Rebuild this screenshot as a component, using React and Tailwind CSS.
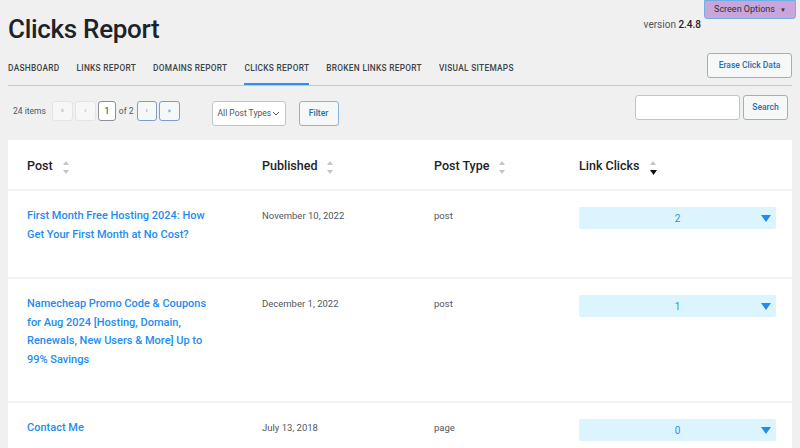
import React from 'react';

const tabs = ['Dashboard', 'Links Report', 'Domains Report', 'Clicks Report', 'Broken Links Report', 'Visual Sitemaps'];

const rows = [
    {
        title: 'First Month Free Hosting 2024: How Get Your First Month at No Cost?',
        date: 'November 10, 2022',
        type: 'post',
        clicks: 2,
        h: 'h-[88px]',
    },
    {
        title: 'Namecheap Promo Code & Coupons for Aug 2024 [Hosting, Domain, Renewals, New Users & More] Up to 99% Savings',
        date: 'December 1, 2022',
        type: 'post',
        clicks: 1,
        h: 'h-[124px]',
    },
    {
        title: 'Contact Me',
        date: 'July 13, 2018',
        type: 'page',
        clicks: 0,
        h: 'h-[60px]',
    },
];

const SortIcon = ({ active }) => (
    <span className="flex flex-col items-center gap-[5px] ml-[10px] mt-[3px]">
        <svg width="6" height="4" viewBox="0 0 6 4"><path d="M3 0L6 4H0z" fill="#c4c4c4" /></svg>
        {active ? (
            <svg width="7" height="5" viewBox="0 0 7 5"><path d="M0 0H7L3.5 5z" fill="#111" /></svg>
        ) : (
            <svg width="6" height="4" viewBox="0 0 6 4"><path d="M0 0H6L3 4z" fill="#c4c4c4" /></svg>
        )}
    </span>
);

const App = () => {
    return (
        <div className="w-[800px] h-[448px] overflow-hidden bg-[#f0f0f0] text-[#1d2327]" style={{ fontFamily: 'Roboto, "Noto Sans", sans-serif' }}>
            {/* 상단 헤더 */}
            <div className="flex justify-between pl-2 pr-1">
                <h1 className="pt-[13px] text-[26px] leading-[32px] font-medium tracking-[-0.3px] text-[#1d2327]">Clicks Report</h1>
                <div className="flex flex-col items-end">
                    <button className="h-[19px] w-[92px] bg-[#c8a5da] border border-[#72aee6] rounded-b-[3px] text-[9px] text-[#2c3338] flex items-center justify-center gap-[5px]">
                        Screen Options <span className="text-[6px]">▼</span>
                    </button>
                    <div className="-mt-[2px] mr-[95px] text-[10px] text-[#50575e]">
                        version <span className="font-medium text-[#1d2327]">2.4.8</span>
                    </div>
                </div>
            </div>

            {/* 탭 */}
            <div className="mx-2 mt-[8px] flex items-end justify-between border-b border-[#c9c9c9]">
                <div className="flex gap-[17px] text-[8.3px] font-medium tracking-[0.3px] text-[#3c434a] uppercase">
                    {tabs.map((t) => (
                        <div
                            key={t}
                            className={`pb-[9px] border-b-2 ${t === 'Clicks Report' ? 'border-[#2e8ff0]' : 'border-transparent'}`}
                        >
                            {t}
                        </div>
                    ))}
                </div>
                <button className="mb-[7px] h-[25px] w-[85px] border border-[#8cb3d9] rounded-[3px] bg-[#f6f7f7] text-[8.5px] font-medium text-[#2271b1]">
                    Erase Click Data
                </button>
            </div>

            {/* 툴바 */}
            <div className="mx-2 mt-[9px] flex items-start justify-between">
                <div className="flex items-start mt-[6px] text-[8.5px] text-[#50575e]">
                    <div className="flex items-center h-[20px]">
                        <span className="ml-[5px] mr-[6px]">24 items</span>
                        <span className="w-[21px] h-[20px] flex items-center justify-center border border-[#e4e4e4] rounded-[3px] bg-[#f6f7f7] text-[#a7aaad] text-[7px]">«</span>
                        <span className="ml-[2px] w-[21px] h-[20px] flex items-center justify-center border border-[#e4e4e4] rounded-[3px] bg-[#f6f7f7] text-[#a7aaad] text-[7px]">‹</span>
                        <span className="ml-[2px] w-[18px] h-[20px] flex items-center justify-center border border-[#8c8f94] rounded-[3px] bg-white text-[#2c3338]">1</span>
                        <span className="ml-[3px] mr-[3px]">of 2</span>
                        <span className="w-[20px] h-[20px] flex items-center justify-center border border-[#7b9fcc] rounded-[3px] bg-[#f6f7f7] text-[#2e8ff0] text-[7px]">›</span>
                        <span className="ml-[2px] w-[21px] h-[20px] flex items-center justify-center border border-[#7b9fcc] rounded-[3px] bg-[#f6f7f7] text-[#2e8ff0] text-[7px]">»</span>
                    </div>
                    <div className="ml-[32px] w-[74px] h-[25px] flex items-center justify-between px-[5px] whitespace-nowrap border border-[#c3c4c7] rounded-[3px] bg-white text-[8.5px] text-[#50575e]">
                        All Post Types
                        <svg width="8" height="5" viewBox="0 0 8 5"><path d="M1 1l3 3 3-3" stroke="#50575e" strokeWidth="1" fill="none" /></svg>
                    </div>
                    <button className="ml-[13px] w-[40px] h-[25px] border border-[#8cb3d9] rounded-[3px] bg-[#f6f7f7] text-[8.5px] font-medium text-[#2271b1]">
                        Filter
                    </button>
                </div>
                <div className="flex items-center gap-[3px] mr-[4px]">
                    <input className="w-[105px] h-[25px] border border-[#c3c4c7] rounded-[3px] bg-white" />
                    <button className="w-[45px] h-[25px] border border-[#8cb3d9] rounded-[3px] bg-[#f6f7f7] text-[8.5px] font-medium text-[#2271b1]">
                        Search
                    </button>
                </div>
            </div>

            {/* 테이블 */}
            <div className="ml-2 mr-[8px] mt-[14px] bg-white">
                <div className="h-[51px] pt-[3px] flex items-center border-b-2 border-[#f2f2f2] text-[12.5px] font-medium text-[#1d2327]">
                    <div className="w-[254px] pl-[19px] flex items-center">Post<SortIcon /></div>
                    <div className="w-[172px] flex items-center">Published<SortIcon /></div>
                    <div className="w-[145px] flex items-center">Post Type<SortIcon /></div>
                    <div className="flex items-center">Link Clicks<SortIcon active /></div>
                </div>
                {rows.map((r, i) => (
                    <div key={i} className={`flex items-start border-b-2 border-[#f2f2f2] ${r.h}`}>
                        <div className="w-[254px] pl-[19px] pr-[40px] pt-[16px] text-[11px] leading-[18.5px] font-medium text-[#1e8cf0]">
                            {r.title}
                        </div>
                        <div className="w-[172px] pt-[18px] text-[9.5px] text-[#50575e]">{r.date}</div>
                        <div className="w-[145px] pt-[18px] text-[9.5px] text-[#50575e]">{r.type}</div>
                        <div className="pt-[16px]">
                            <div className="w-[197px] h-[22px] relative flex items-center justify-center rounded-[2px] bg-[#dcf4fe] text-[10px] text-[#2e8ff0]">
                                {r.clicks}
                                <svg className="absolute right-[5px] top-[8px]" width="10" height="7" viewBox="0 0 10 7"><path d="M0 0H10L5 7z" fill="#1e8cf0" /></svg>
                            </div>
                        </div>
                    </div>
                ))}
            </div>
        </div>
    );
};

export default App;
